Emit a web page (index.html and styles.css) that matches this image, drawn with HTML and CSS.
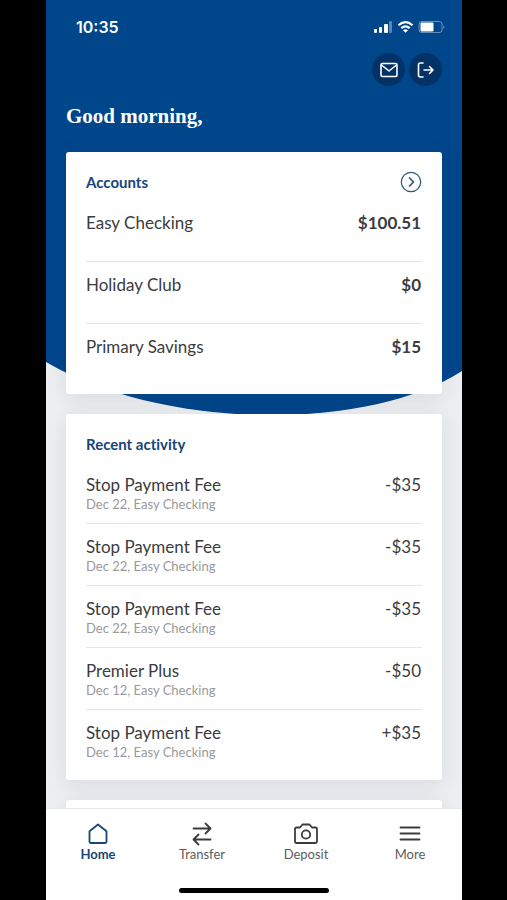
FILE: index.html
```html
<!DOCTYPE html>
<html lang="en">
<head>
<meta charset="utf-8">
<meta name="viewport" content="width=device-width, initial-scale=1">
<title>Home</title>
<link rel="stylesheet" href="styles.css">
</head>
<body>
<div class="phone">
  <svg class="backdrop" viewBox="0 0 416 416" preserveAspectRatio="none" aria-hidden="true">
    <path d="M0 0H416V371C371 400 300 415 225 415C142 415 60 397 0 362Z" fill="#00468b"/>
  </svg>
  <main class="screen">
    <div class="status">
      <time>10:35</time>
      <svg width="72" height="14" viewBox="0 0 72 14" aria-hidden="true">
        <g fill="#fff">
          <rect x="0" y="9" width="3" height="4" rx="1"/>
          <rect x="5" y="7" width="3" height="6" rx="1"/>
          <rect x="10" y="4" width="4" height="9" rx="1"/>
          <rect x="15" y="1" width="3" height="12" rx="1" opacity=".35"/>
        </g>
        <g fill="none" stroke="#fff" stroke-width="2.2">
          <path d="M24.5 5.2Q31.5 -1 38.5 5.2"/>
          <path d="M27.3 8.2Q31.5 4.5 35.7 8.2"/>
        </g>
        <path d="M29 10.2Q31.5 8.2 34 10.2L31.5 12.8Z" fill="#fff"/>
        <rect x="45" y="1.5" width="23" height="11" rx="2.5" fill="none" stroke="#fff" stroke-opacity=".4"/>
        <rect x="46.5" y="2.5" width="13" height="9" rx="1" fill="#fff"/>
        <path d="M69.5 5.2Q71.500 7 69.500 8.800Z" fill="#fff" opacity=".5"/>
      </svg>
    </div>
    <div class="actions">
      <button type="button" class="round" aria-label="Messages">
        <svg width="20" height="20" viewBox="0 0 20 20"><rect x="2" y="3.5" width="16" height="13" rx="1.5"/><path d="M2.5 5L10 11L17.5 5"/></svg>
      </button>
      <button type="button" class="round" aria-label="Log out">
        <svg width="20" height="20" viewBox="0 0 20 20"><path d="M7 3H4.500Q2.500 3 2.500 5V15Q2.500 17 4.500 17H7M8 10H17M13.500 6.500L17 10L13.500 13.500"/></svg>
      </button>
    </div>
    <h1>Good morning,</h1>

    <section class="card accounts">
      <header>
        <h2>Accounts</h2>
        <a href="#accounts" class="more" aria-label="All accounts">
          <svg width="22" height="22" viewBox="0 0 22 22"><circle cx="11" cy="11" r="9.7"/><path d="M9.5 7L13.500 11L9.500 15" stroke-width="1.700"/></svg>
        </a>
      </header>
      <ul>
        <li><span>Easy Checking</span><b>$100.51</b></li>
        <li><span>Holiday Club</span><b>$0</b></li>
        <li><span>Primary Savings</span><b>$15</b></li>
      </ul>
    </section>

    <section class="card activity">
      <header><h2>Recent activity</h2></header>
      <ul>
        <li><div><span>Stop Payment Fee</span><small>Dec 22, Easy Checking</small></div><span>-$35</span></li>
        <li><div><span>Stop Payment Fee</span><small>Dec 22, Easy Checking</small></div><span>-$35</span></li>
        <li><div><span>Stop Payment Fee</span><small>Dec 22, Easy Checking</small></div><span>-$35</span></li>
        <li><div><span>Premier Plus</span><small>Dec 12, Easy Checking</small></div><span>-$50</span></li>
        <li><div><span>Stop Payment Fee</span><small>Dec 12, Easy Checking</small></div><span>+$35</span></li>
      </ul>
    </section>

    <section class="card next"></section>
  </main>

  <nav class="tabs">
    <a href="#home" class="current" aria-current="page">
      <svg width="24" height="24" viewBox="0 0 24 24"><path d="M3.5 9.2L12 2.5L20.5 9.2V19.5Q20.5 21 19 21H5Q3.500 21 3.500 19.500Z"/></svg>
      Home
    </a>
    <a href="#transfer">
      <svg width="24" height="24" viewBox="0 0 24 24"><path d="M3.5 6.5H20.500M15.500 1.500L20.500 6.500L15.500 11.500M20.500 17.500H3.500M8.500 12.500L3.500 17.500L8.500 22.500"/></svg>
      Transfer
    </a>
    <a href="#deposit">
      <svg width="26" height="24" viewBox="0 0 26 24"><path d="M3.5 5.5H7L9.500 2.500H16.500L19 5.500H22.500Q24 5.500 24 7V19.500Q24 21 22.500 21H3.500Q2 21 2 19.500V7Q2 5.500 3.500 5.500Z"/><circle cx="13" cy="12.500" r="4.200"/></svg>
      Deposit
    </a>
    <a href="#more">
      <svg width="24" height="24" viewBox="0 0 24 24"><path d="M2.5 5.5H21.500M2.500 11.500H21.500M2.500 17.500H21.500"/></svg>
      More
    </a>
  </nav>
  <div class="handle"><span></span></div>
</div>
</body>
</html>
```
FILE: styles.css
```css
* {
  box-sizing: border-box;
}

body {
  margin: 0;
  padding: 0 45px 0 46px;
  background: #000;
  color: #3c3c3e;
  font: 17px/24px Lato, "Noto Sans", sans-serif;
  font-variant-ligatures: none;
}

h1, h2, ul {
  margin: 0;
  padding: 0;
}

ul {
  list-style: none;
}

.phone {
  position: relative;
  display: flex;
  flex-direction: column;
  height: 100vh;
  background: #eceef1;
}

.backdrop {
  position: absolute;
  top: 0;
  left: 0;
  width: 100%;
  height: 416px;
}

.screen {
  position: relative;
  flex: 1;
  min-height: 0;
  overflow: hidden;
  padding: 0 20px;
}

.status {
  display: flex;
  justify-content: space-between;
  align-items: center;
  height: 53px;
  padding: 0 0 0 10px;
  margin-right: -4px;
  color: #fff;
}

.status time {
  font: 600 16px/20px Inter, sans-serif;
}

.actions {
  display: flex;
  justify-content: flex-end;
  gap: 4px;
}

.round {
  display: grid;
  place-items: center;
  width: 33px;
  height: 33px;
  padding: 0;
  border: 0;
  border-radius: 50%;
  background: #053266;
}

svg {
  flex: none;
}

.round svg, .more svg, .tabs svg {
  fill: none;
  stroke: currentColor;
  stroke-linecap: round;
  stroke-linejoin: round;
}

.round svg {
  color: #fff;
  stroke-width: 1.6;
}

h1 {
  padding: 16px 0 22px;
  color: #fff;
  font: bold 21px/28px "Liberation Serif", serif;
}

.card {
  margin-bottom: 20px;
  padding: 19px 20px 8px;
  border-radius: 3px;
  background: #fff;
  box-shadow: 0 4px 20px rgba(40, 50, 70, 0.1);
}

.card header {
  display: flex;
  justify-content: space-between;
  align-items: center;
  height: 22px;
}

h2 {
  color: #17457a;
  font-size: 15px;
  line-height: 22px;
}

.more {
  display: flex;
  color: #2b5876;
}

.more svg {
  stroke-width: 1.2;
}

.card li {
  display: flex;
  justify-content: space-between;
  height: 62px;
  border-bottom: 1px solid #e4e5e7;
}

.card li:last-child {
  border-bottom: 0;
}

.card li > span, .card b {
  padding-right: 1px;
}

.accounts ul {
  padding-top: 7px;
}

.accounts li {
  padding-top: 11px;
}

.activity ul {
  padding-top: 7px;
}

.activity li {
  padding-top: 11px;
}

.activity small {
  display: block;
  color: #98999b;
  font-size: 13px;
  line-height: 15px;
}

.next {
  height: 80px;
}

.tabs {
  position: relative;
  display: grid;
  grid-template-columns: repeat(4, 1fr);
  padding: 13px 0 17px;
  border-top: 1px solid #e6e8ea;
  background: #fff;
}

.tabs a {
  display: flex;
  flex-direction: column;
  align-items: center;
  color: #5c5c5e;
  font-size: 13px;
  line-height: 17px;
  text-decoration: none;
}

.tabs svg {
  color: #3c3c3e;
  stroke-width: 1.8;
}

.tabs .current, .tabs .current svg {
  color: #17457a;
}

.tabs .current {
  font-weight: bold;
}

.handle {
  display: grid;
  place-items: center;
  height: 20px;
  background: #fff;
}

.handle span {
  width: 36%;
  height: 5px;
  border-radius: 3px;
  background: #000;
}
```
